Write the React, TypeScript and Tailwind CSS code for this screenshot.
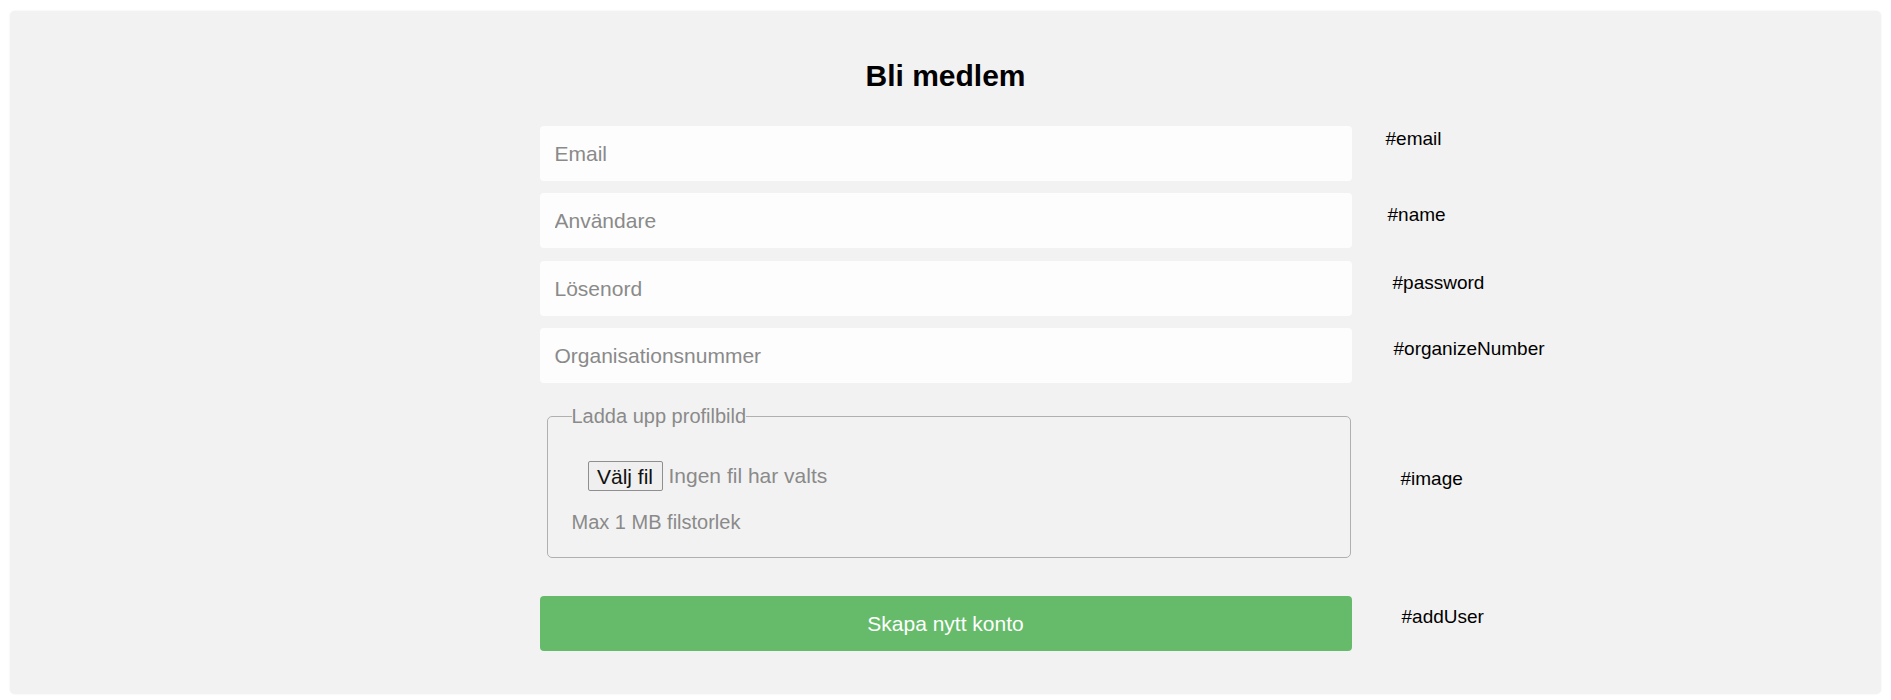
import React from "react";

const fields = [
    { placeholder: "Email", label: "#email", top: "mt-[32px]", labelCls: "pl-[34px] pt-[2px]" },
    { placeholder: "Användare", label: "#name", top: "mt-[12px]", labelCls: "pl-[36px] pt-[11px]" },
    { placeholder: "Lösenord", label: "#password", top: "mt-[13px]", labelCls: "pl-[41px] pt-[11px]" },
    { placeholder: "Organisationsnummer", label: "#organizeNumber", top: "mt-[12px]", labelCls: "pl-[42px] pt-[10px]" },
];

const App = () => {
    return (
        <div className="min-h-screen bg-white pt-[11px] px-[10px] font-['Liberation_Sans',Arial,sans-serif]">
            <div className="grid grid-cols-[1fr_812px_1fr] rounded-[5px] bg-[#f2f2f2] pt-[47px] pb-[43px] shadow-[0_0_2px_rgba(0,0,0,0.08)]">
                {/* Title */}
                <h2 className="col-start-2 text-center text-[30px] leading-[36px] font-bold text-black">Bli medlem</h2>

                {/* Text fields */}
                {fields.map((f) => (
                    <React.Fragment key={f.label}>
                        <input
                            type="text"
                            placeholder={f.placeholder}
                            className={`${f.top} col-start-2 h-[55px] w-full rounded-[4px] bg-[#fdfdfd] px-[15px] text-[21px] text-black outline-none placeholder:text-[#8a8a8a]`}
                        />
                        <div className={`${f.top} ${f.labelCls} text-[19px] leading-[22px] text-black`}>{f.label}</div>
                    </React.Fragment>
                ))}

                {/* Image upload */}
                <fieldset className="col-start-2 mt-[22px] ml-[7px] mr-[1px] rounded-[5px] border border-[#b0b0b0] px-[24px] pb-[23px]">
                    <legend className="px-0 text-[20px] leading-[23px] text-[#8a8a8a]">Ladda upp profilbild</legend>
                    <div className="mt-[33px] ml-[16px] flex items-center">
                        <button
                            type="button"
                            className="h-[30px] w-[75px] rounded-[2px] border border-[#8f8f8f] bg-[#efefef] text-[21px] leading-none text-[#111]"
                        >
                            Välj fil
                        </button>
                        <span className="ml-[6px] text-[21px] leading-[24px] text-[#8a8a8a]">Ingen fil har valts</span>
                    </div>
                    <p className="mt-[20px] text-[20px] leading-[23px] text-[#8a8a8a]">Max 1 MB filstorlek</p>
                </fieldset>
                <div className="mt-[22px] pl-[49px] pt-[63px] text-[19px] leading-[22px] text-black">#image</div>

                {/* Submit */}
                <button
                    type="submit"
                    className="col-start-2 mt-[38px] h-[55px] w-full rounded-[4px] bg-[#66bb6a] text-[21px] text-white"
                >
                    Skapa nytt konto
                </button>
                <div className="mt-[38px] pl-[50px] pt-[10px] text-[19px] leading-[22px] text-black">#addUser</div>
            </div>
        </div>
    );
};

export default App;
